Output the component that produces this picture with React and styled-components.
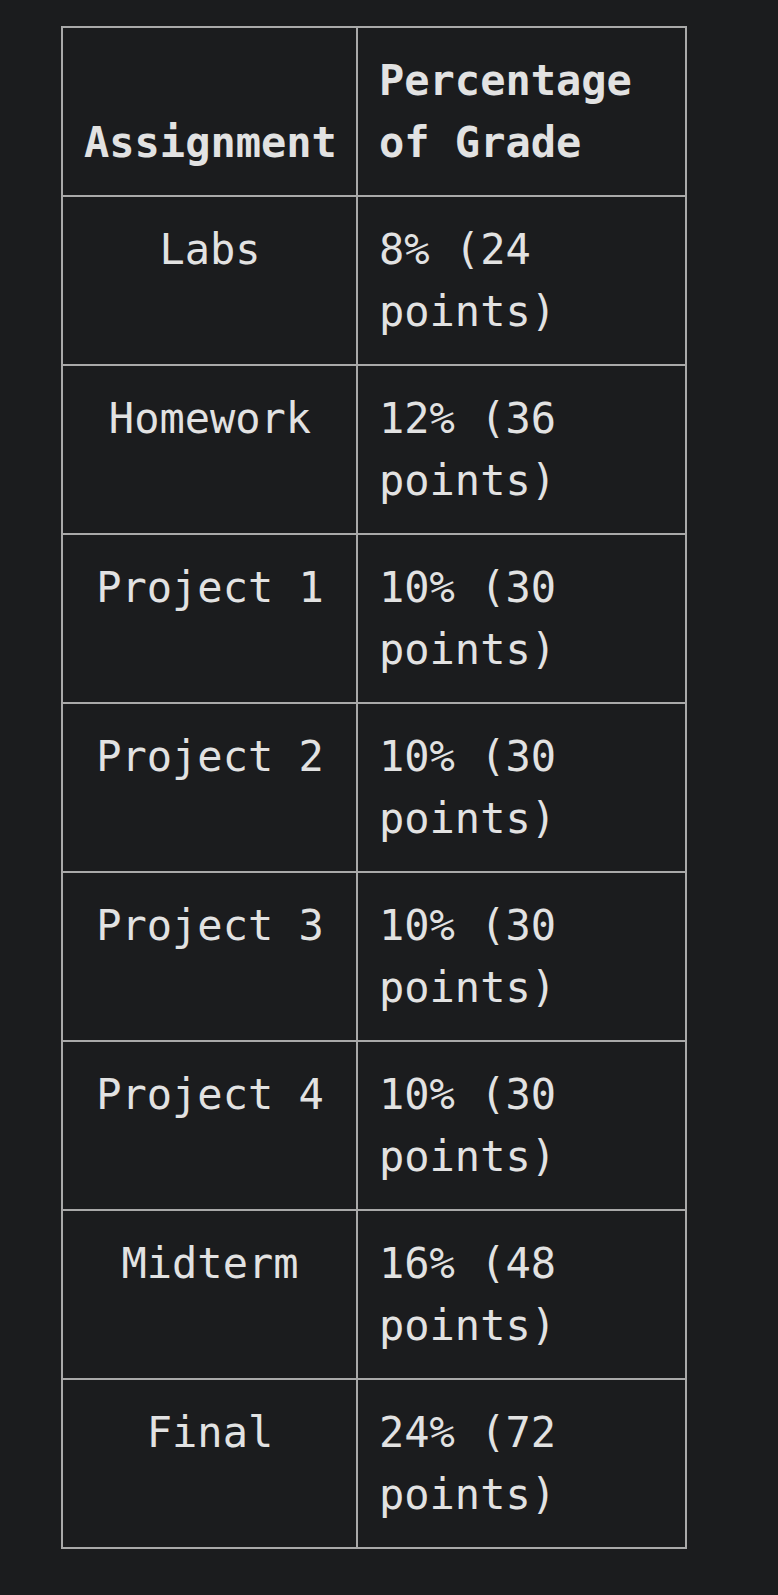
import React from 'react';
import styled, { createGlobalStyle } from 'styled-components';

const rows = [
    { name: 'Labs', share: '8% (24 points)' },
    { name: 'Homework', share: '12% (36 points)' },
    { name: 'Project 1', share: '10% (30 points)' },
    { name: 'Project 2', share: '10% (30 points)' },
    { name: 'Project 3', share: '10% (30 points)' },
    { name: 'Project 4', share: '10% (30 points)' },
    { name: 'Midterm', share: '16% (48 points)' },
    { name: 'Final', share: '24% (72 points)' },
];

const GlobalStyle = createGlobalStyle`
    html, body {
        margin: 0;
        background: #1b1c1e;
    }
`;

const Page = () => (
    <Wrapper>
        <GlobalStyle />
        <GradeTable>
            <colgroup>
                <col style={{ width: 295 }} />
                <col style={{ width: 329 }} />
            </colgroup>
            <thead>
                <tr>
                    <Cell as="th" center bottom bold>Assignment</Cell>
                    <Cell as="th" bold>Percentage of Grade</Cell>
                </tr>
            </thead>
            <tbody>
                {rows.map(row => (
                    <tr key={row.name}>
                        <Cell center>{row.name}</Cell>
                        <Cell>{row.share}</Cell>
                    </tr>
                ))}
            </tbody>
        </GradeTable>
    </Wrapper>
);

const Wrapper = styled.div`
    min-height: 1595px;
    padding: 26px 0 0 61px;
    box-sizing: border-box;
    background: #1b1c1e;
`;

const GradeTable = styled.table`
    width: 624px;
    table-layout: fixed;
    border-collapse: collapse;
    font-family: "DejaVu Sans Mono", monospace;
    font-size: 42px;
    line-height: 62px;
    color: #e2e2e2;
`;

const Cell = styled.td`
    border: 2px solid #a9a9a9;
    padding: 21.5px 20px 21.5px 21px;
    text-align: ${p => (p.center ? 'center' : 'left')};
    vertical-align: ${p => (p.bottom ? 'bottom' : 'top')};
    font-weight: ${p => (p.bold ? 700 : 400)};
`;

export default function App() {
    return <Page />;
}
